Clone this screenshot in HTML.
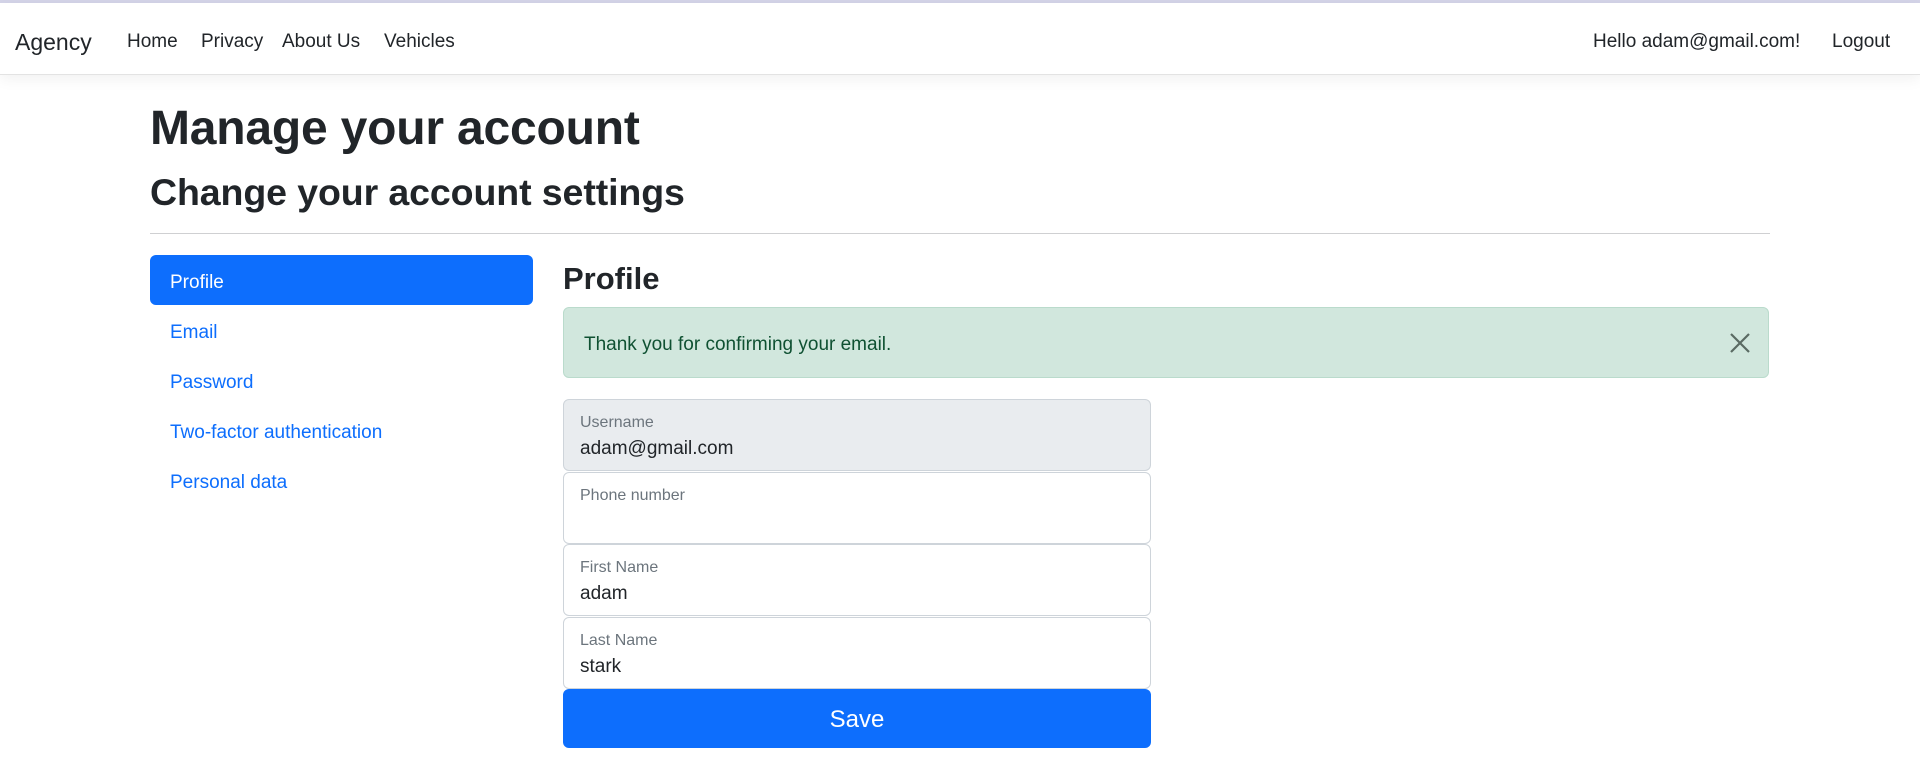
<!DOCTYPE html>
<html><head><meta charset="utf-8"><style>
*{box-sizing:border-box;margin:0;padding:0}
body{width:1920px;height:780px;overflow:hidden;background:#fff;font-family:"Liberation Sans",Arial,sans-serif;color:#212529;position:relative}
.topline{position:absolute;left:0;top:0;width:1920px;height:3px;background:#d4d4e8}
.nav{position:absolute;left:0;top:3px;width:1920px;height:72px;border-bottom:1px solid #e3e3e3;box-shadow:0 4px 14px rgba(0,0,0,.06)}
.a{position:absolute;white-space:nowrap}
.nav .a{top:28px;font-size:19px;color:#212529}
.brand{font-size:23px!important;top:26px!important}
h1{position:absolute;left:150px;top:100px;font-size:48px;font-weight:bold;line-height:1.2;letter-spacing:-0.2px}
h2{position:absolute;left:150px;top:170px;font-size:37.5px;font-weight:bold;line-height:1.2;letter-spacing:-0.1px}
.hr{position:absolute;left:150px;top:233px;width:1620px;height:1px;background:#cfd0d2}
.pill{position:absolute;left:150px;top:255px;width:383px;height:50px;background:#0d6efd;border-radius:6px}
.side{font-size:19px;color:#0d6efd}
.h3{position:absolute;left:563px;top:261px;font-size:31px;font-weight:bold}
.alert{position:absolute;left:563px;top:307px;width:1206px;height:71px;background:#d1e7dd;border:1px solid #badbcc;border-radius:6px;color:#0f5132;font-size:19px}
.field{position:absolute;left:563px;width:588px;height:72px;border:1px solid #ced4da;border-radius:6px;background:#fff}
.field .l{position:absolute;left:16px;top:14px;font-size:16px;color:#6c757d}
.field .v{position:absolute;left:16px;top:38px;font-size:19px;color:#212529}
.btn{position:absolute;left:563px;top:689px;width:588px;height:59px;background:#0d6efd;border-radius:6px;color:#fff;font-size:24px;text-align:center;line-height:62px}
</style></head><body>
<div class="topline"></div>
<div class="nav">
<span class="a brand" style="left:15px">Agency</span>
<span class="a" style="left:127px">Home</span>
<span class="a" style="left:201px">Privacy</span>
<span class="a" style="left:282px">About Us</span>
<span class="a" style="left:384px">Vehicles</span>
<span class="a" style="left:1593px">Hello adam@gmail.com!</span>
<span class="a" style="left:1832px">Logout</span>
</div>
<h1>Manage your account</h1>
<h2>Change your account settings</h2>
<div class="hr"></div>
<div class="pill"></div>
<span class="a side" style="left:170px;top:272px;color:#fff">Profile</span>
<span class="a side" style="left:170px;top:322px">Email</span>
<span class="a side" style="left:170px;top:372px">Password</span>
<span class="a side" style="left:170px;top:422px">Two-factor authentication</span>
<span class="a side" style="left:170px;top:472px">Personal data</span>
<div class="h3">Profile</div>
<div class="alert"><span class="a" style="left:20px;top:26px">Thank you for confirming your email.</span>
<svg class="a" style="left:1165px;top:24px" width="22" height="22" viewBox="0 0 22 22"><path d="M2 2L20 20M20 2L2 20" stroke="#5a6b63" stroke-width="2.2"/></svg></div>
<div class="field" style="top:399px;background:#e9ecef"><span class="l">Username</span><span class="v">adam@gmail.com</span></div>
<div class="field" style="top:472px"><span class="l">Phone number</span></div>
<div class="field" style="top:544px"><span class="l">First Name</span><span class="v">adam</span></div>
<div class="field" style="top:617px"><span class="l">Last Name</span><span class="v">stark</span></div>
<div class="btn">Save</div>
</body></html>
